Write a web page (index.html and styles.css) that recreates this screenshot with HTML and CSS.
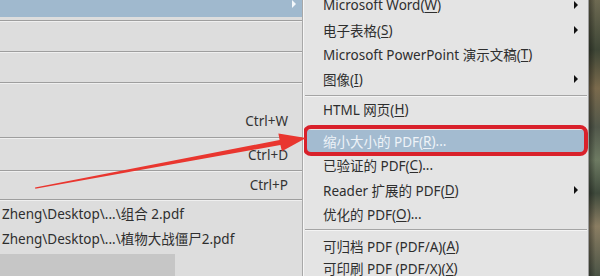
FILE: index.html
```html
<!DOCTYPE html>
<html lang="zh-CN">
<head>
    <meta charset="UTF-8">
    <title>另存为 - 子菜单</title>
    <link rel="stylesheet" href="styles.css">
</head>
<body>
    <div class="main-menu">
        <div class="menu-row row-first">
            <div class="active-bar"><span class="arrow-white"></span></div>
        </div>
        <div class="menu-row row-2"></div>
        <div class="menu-row row-3"></div>
        <div class="menu-row row-4"><span class="shortcut">Ctrl+W</span></div>
        <div class="menu-row row-5"><span class="shortcut">Ctrl+D</span></div>
        <div class="menu-row row-6"><span class="shortcut">Ctrl+P</span></div>
        <div class="recent">
            <div class="recent-item">Zheng\Desktop\...\组合 2.pdf</div>
            <div class="recent-item">Zheng\Desktop\...\植物大战僵尸2.pdf</div>
        </div>
        <div class="gray-block"></div>
    </div>

    <div class="submenu">
        <div class="sub-item h25">Microsoft Word(<u>W</u>)<span class="arrow"></span></div>
        <div class="sub-item h25">电子表格(<u>S</u>)<span class="arrow"></span></div>
        <div class="sub-item h24">Microsoft PowerPoint 演示文稿(<u>T</u>)</div>
        <div class="sub-item h25">图像(<u>I</u>)<span class="arrow"></span></div>
        <div class="separator"></div>
        <div class="sub-item h20">HTML 网页(<u>H</u>)</div>
        <div class="sub-item highlighted">缩小大小的 PDF(<u>R</u>)...<span class="red-box"></span></div>
        <div class="sub-item h25">已验证的 PDF(<u>C</u>)...</div>
        <div class="sub-item h25">Reader 扩展的 PDF(<u>D</u>)<span class="arrow"></span></div>
        <div class="sub-item h24">优化的 PDF(<u>O</u>)...</div>
        <div class="separator sep-low"></div>
        <div class="sub-item h24">可归档 PDF (PDF/A)(<u>A</u>)</div>
        <div class="sub-item h20">可印刷 PDF (PDF/X)(<u>X</u>)</div>
    </div>

    <div class="photo"></div>

    <!-- annotation arrow drawn over the menus -->
    <svg class="pointer" width="600" height="276" viewBox="0 0 600 276">
        <polygon points="35,187.4 35.3,188.8 280.4,145 281.9,151.2 306,138 278.4,133.6 279.6,140" fill="#e9362f"/>
    </svg>
</body>
</html>
```

FILE: styles.css
```css
* {
    margin: 0;
    padding: 0;
    box-sizing: border-box;
}

body {
    width: 600px;
    height: 276px;
    overflow: hidden;
    display: flex;
    position: relative;
    font-family: "Noto Sans", "Noto Sans CJK SC", sans-serif;
    font-size: 13.5px;
    color: #2e2e2e;
    background: #dcdcdc;
}

.main-menu {
    width: 303px;
    flex-shrink: 0;
    display: flex;
    flex-direction: column;
    background: #dddddd;
    border-right: 1px solid #a8a8a8;
}

.menu-row {
    border-bottom: 1px solid #9e9e9e;
    box-shadow: 0 1px 0 #efefef;
    display: flex;
    justify-content: flex-end;
    align-items: flex-end;
    padding-right: 14px;
    flex-shrink: 0;
}

.row-first {
    height: 21px;
    padding-right: 0;
    align-items: flex-start;
}

.active-bar {
    width: 100%;
    height: 17px;
    background: #a0b9ce;
    position: relative;
}

.arrow-white {
    position: absolute;
    right: 6px;
    top: 0;
    width: 0;
    height: 0;
    border-top: 4px solid transparent;
    border-bottom: 4px solid transparent;
    border-left: 4px solid #f4f8fb;
}

.row-2 { height: 31px; }
.row-3 { height: 31px; }
.row-4 { height: 55px; padding-bottom: 7px; }
.row-5 { height: 33px; padding-bottom: 6px; }
.row-6 { height: 29px; padding-bottom: 5px; }

.shortcut {
    color: #333;
    line-height: 18px;
}

.recent {
    padding-top: 2px;
}

.recent-item {
    height: 25px;
    line-height: 25px;
    padding-left: 2px;
    white-space: nowrap;
}

.gray-block {
    margin-top: 2px;
    width: 175px;
    height: 24px;
    background: #c6c6c6;
}

.submenu {
    width: 286px;
    flex-shrink: 0;
    display: flex;
    flex-direction: column;
    margin-top: -8px;
    height: 284px;
    overflow: hidden;
    background: #e4e4e4;
    border-left: 1px solid #f6f6f6;
    border-right: 1px solid #9c9c9c;
}

.sub-item {
    position: relative;
    display: flex;
    align-items: center;
    padding-left: 19px;
    white-space: nowrap;
    flex-shrink: 0;
}

.sub-item u {
    text-underline-offset: 2px;
}

.h20 { height: 20px; }
.h24 { height: 24px; }
.h25 { height: 25px; }

.arrow {
    position: absolute;
    right: 10px;
    top: 50%;
    margin-top: -4px;
    width: 0;
    height: 0;
    border-top: 4px solid transparent;
    border-bottom: 4px solid transparent;
    border-left: 4px solid #111;
}

.separator {
    height: 8px;
    flex-shrink: 0;
    position: relative;
}

.separator::after {
    content: "";
    position: absolute;
    left: 1px;
    right: 1px;
    top: 4px;
    border-top: 1px solid #a4a4a4;
    border-bottom: 1px solid #f4f4f4;
}

.sep-low::after {
    top: 3px;
}

.highlighted {
    margin-top: 11px;
    height: 22px;
    background: #a3bbd0;
    color: #eef3f8;
    margin-left: 2px;
    margin-right: 3px;
    padding-left: 17px;
}

.red-box {
    position: absolute;
    left: -3px;
    right: -3px;
    top: -5px;
    bottom: -4px;
    border: 4px solid #d9212b;
    border-radius: 8px;
}

.photo {
    flex: 1;
    background:
        linear-gradient(90deg, rgba(0, 0, 0, 0.35), rgba(0, 0, 0, 0) 60%),
        linear-gradient(180deg, #6e6a52 0%, #3e4636 18%, #7a6a4c 32%, #51574a 46%, #6d7a62 58%, #3f4a3c 70%, #8a7d62 82%, #4b5446 100%);
}

.pointer {
    position: absolute;
    left: 0;
    top: 0;
    pointer-events: none;
}
```
